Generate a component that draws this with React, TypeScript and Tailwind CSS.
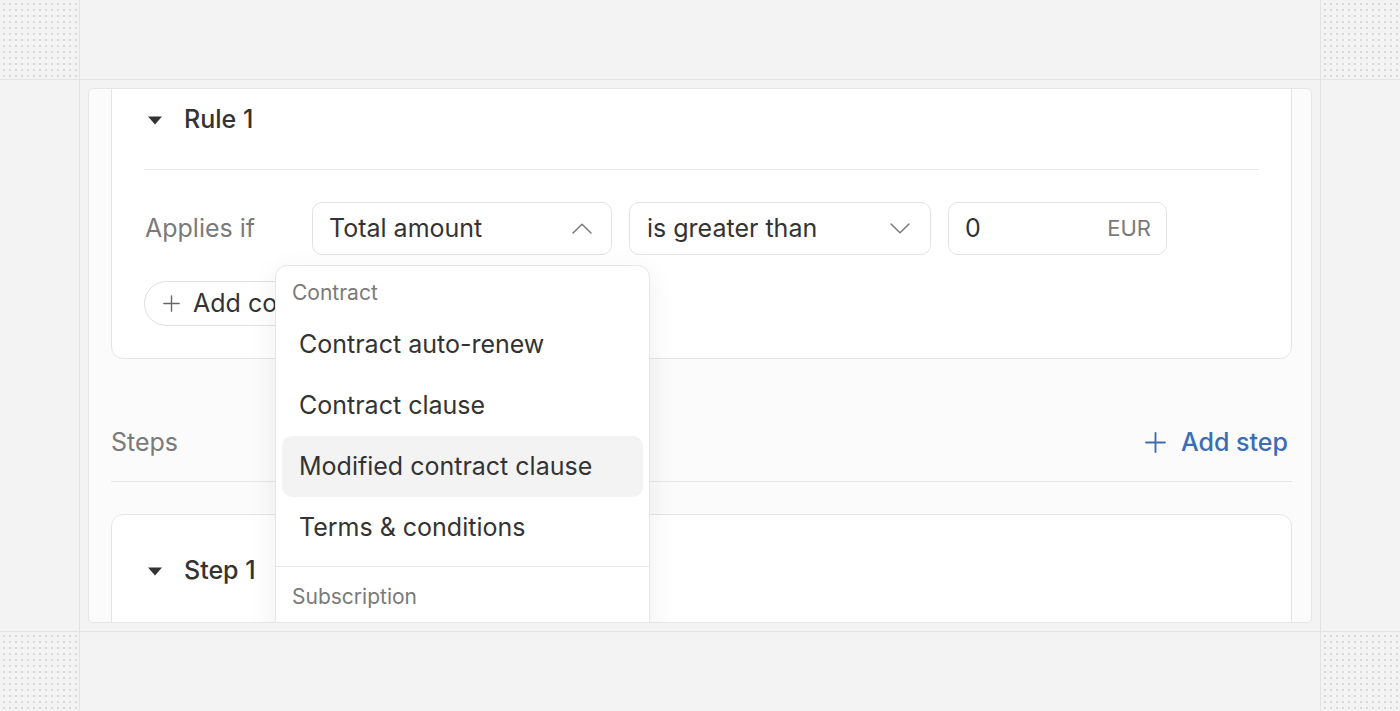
const Caret = () => (
  <svg width="16" height="9" viewBox="0 0 16 9" className="shrink-0">
    <path d="M1 0.5 H15 L8 8.5 Z" fill="#333333" />
  </svg>
);

const Chevron = ({ up = false }: { up?: boolean }) => (
  <svg width="20" height="11" viewBox="0 0 20 11" fill="none" className="shrink-0">
    <path
      d={up ? "M1 10 L10 1.2 L19 10" : "M1 1 L10 9.8 L19 1"}
      stroke="#7a7a7a"
      strokeWidth="1.5"
      strokeLinecap="round"
      strokeLinejoin="round"
    />
  </svg>
);

const PlusIcon = ({ size, stroke, color }: { size: number; stroke: number; color: string }) => (
  <svg width={size} height={size} viewBox="0 0 20 20" fill="none" className="shrink-0">
    <path d="M10 1 V19 M1 10 H19" stroke={color} strokeWidth={stroke} strokeLinecap="round" />
  </svg>
);

const Dots = () => (
  <div className="bg-[#f3f3f3] bg-[radial-gradient(circle,#d9d9d9_1px,transparent_1.3px)] bg-[length:6px_6px] bg-[position:1px_1px]" />
);

const Plain = () => <div className="bg-[#f3f3f3]" />;

const menuGroups = [
  {
    title: "Contract",
    items: ["Contract auto-renew", "Contract clause", "Modified contract clause", "Terms & conditions"],
  },
  { title: "Subscription", items: ["Subscription plan"] },
];

function Dropdown() {
  return (
    <div className="absolute left-[-37px] top-[63px] z-20 w-[375px] rounded-xl border border-[#e6e6e6] bg-white shadow-[0_8px_30px_rgba(0,0,0,0.07)]">
      {menuGroups.map((group, gi) => (
        <div key={group.title} className={gi > 0 ? "border-t border-[#e8e8e8]" : ""}>
          <div className={`px-4 text-[21px] leading-[28px] text-[#7a7a7a] ${gi > 0 ? "pt-[16px] pb-2" : "pt-[13px] pb-[7px]"}`}>
            {group.title}
          </div>
          <div className="px-[6px] pb-2">
            {group.items.map((item) => (
              <div
                key={item}
                className={`flex h-[61px] items-center rounded-[10px] px-[17px] text-[25px] text-[#333333] ${
                  item === "Modified contract clause" ? "bg-[#f3f3f3]" : ""
                }`}
              >
                {item}
              </div>
            ))}
          </div>
        </div>
      ))}
    </div>
  );
}

function RuleCard() {
  return (
    <div className="-mt-[14px] rounded-xl border border-[#e5e5e5] bg-white px-8 pt-[28px] pb-[32px]">
      <div className="flex h-8 items-center gap-[21px] pl-[3px]">
        <Caret />
        <span className="text-[25px] font-medium text-[#333333]">Rule 1</span>
      </div>
      <div className="mt-[33px] border-t border-[#e8e8e8]" />
      <div className="mt-[32px] flex items-center">
        <span className="w-[168px] pl-[1px] text-[25px] text-[#7a7a7a]">Applies if</span>
        <div className="relative">
          <div className="flex h-[53px] w-[300px] items-center justify-between rounded-[10px] border border-[#e2e2e2] bg-white pl-[16px] pr-[19px]">
            <span className="text-[25px] text-[#333333]">Total amount</span>
            <Chevron up />
          </div>
          <Dropdown />
        </div>
        <div className="ml-[17px] flex h-[53px] w-[302px] items-center justify-between rounded-[10px] border border-[#e2e2e2] bg-white pl-[17px] pr-[20px]">
          <span className="text-[25px] text-[#333333]">is greater than</span>
          <Chevron />
        </div>
        <div className="ml-[17px] flex h-[53px] w-[219px] items-center justify-between rounded-[10px] border border-[#e2e2e2] bg-white pl-[16px] pr-[15px]">
          <span className="text-[25px] text-[#333333]">0</span>
          <span className="text-[22px] text-[#7a7a7a]">EUR</span>
        </div>
      </div>
      <div className="mt-[26px]">
        <button className="flex h-[45px] items-center gap-[13px] rounded-full border border-[#e0e0e0] bg-white pl-[18px] pr-5">
          <PlusIcon size={17} stroke={1.6} color="#666666" />
          <span className="text-[25px] text-[#333333]">Add condition</span>
        </button>
      </div>
    </div>
  );
}

export default function App() {
  return (
    <div
      className="grid h-[711px] w-[1400px] grid-cols-[79px_1fr_79px] grid-rows-[79px_1fr_79px] gap-px overflow-hidden bg-[#e3e3e3]"
      style={{ fontFamily: "Inter, 'Noto Sans', sans-serif" }}
    >
      <Dots />
      <Plain />
      <Dots />
      <Plain />
      <div className="min-h-0 bg-[#f3f3f3] p-2">
        <div className="h-full overflow-hidden rounded-[5px] border border-[#e6e6e6] bg-[#fbfbfb] pl-[22px] pr-[19px]">
          <RuleCard />

          <div className="mt-[67px] flex items-center justify-between border-b border-[#e6e6e6] pb-[23px]">
            <span className="text-[25px] leading-8 text-[#7a7a7a]">Steps</span>
            <button className="flex items-center gap-[15px] pr-[4px] text-[#3b6db3]">
              <PlusIcon size={21} stroke={1.8} color="#3b6db3" />
              <span className="text-[25px] leading-8 font-medium">Add step</span>
            </button>
          </div>

          <div className="mt-[32px] rounded-xl border border-[#e5e5e5] bg-white px-8 pt-[40px] pb-16">
            <div className="flex h-8 items-center gap-[21px] pl-[3px]">
              <Caret />
              <span className="text-[25px] font-medium text-[#333333]">Step 1</span>
            </div>
          </div>
        </div>
      </div>
      <Plain />
      <Dots />
      <Plain />
      <Dots />
    </div>
  );
}
